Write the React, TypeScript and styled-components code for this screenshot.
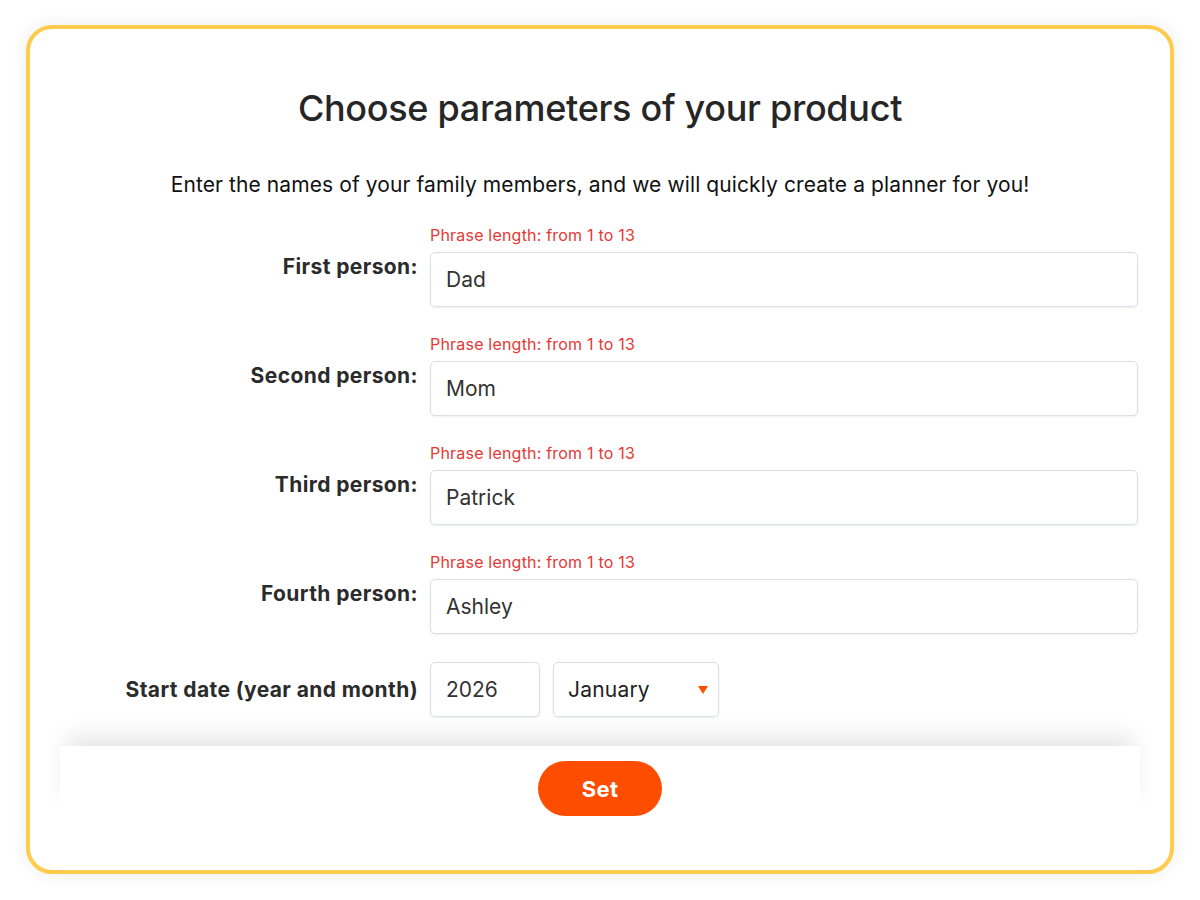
import React, { FC } from 'react'
import styled, { createGlobalStyle } from 'styled-components'

const GlobalStyle = createGlobalStyle`
  body {
    margin: 0;
    background: #ffffff;
    font-family: Inter, "Noto Sans", sans-serif;
    color: #222222;
  }
`

const Card = styled.div`
  box-sizing: border-box;
  width: 1148px;
  height: 849px;
  margin: 25px 26px;
  border: 4px solid #ffcb4c;
  border-radius: 26px;
  background: #ffffff;
  box-shadow: 0 0 18px rgba(0, 0, 0, 0.08);
  display: flex;
  flex-direction: column;
  align-items: center;
  padding-top: 57px;
  overflow: hidden;
`

const Title = styled.h1`
  margin: 0;
  font-size: 36px;
  line-height: 44px;
  font-weight: 500;
  color: #262626;
  letter-spacing: -0.3px;
`

const Subtitle = styled.p`
  margin: 43px 0 0;
  font-size: 21px;
  line-height: 24px;
  font-weight: 400;
  letter-spacing: 0.1px;
  color: #111111;
`

const Form = styled.div`
  box-sizing: border-box;
  margin-top: 29px;
  width: 1080px;
  padding-right: 2px;
  display: flex;
  flex-direction: column;
  gap: 28px;
`

const Row = styled.div`
  display: grid;
  grid-template-columns: 358px 1fr;
  column-gap: 12px;
  align-items: center;
`

const Label = styled.label`
  text-align: right;
  font-size: 21px;
  font-weight: 700;
  letter-spacing: 0.4px;
  color: #2b2b2b;
`

const Field = styled.div`
  display: flex;
  flex-direction: column;
  gap: 8px;
`

const Hint = styled.span`
  font-size: 16px;
  line-height: 18px;
  letter-spacing: 0.2px;
  color: #e53935;
`

const TextInput = styled.input<{ $width?: number }>`
  box-sizing: border-box;
  width: ${p => (p.$width ? `${p.$width}px` : '100%')};
  height: 55px;
  padding: 0 15px;
  border: 1px solid #dcdfe8;
  border-radius: 5px;
  box-shadow: 0 1px 2px rgba(30, 40, 80, 0.08);
  font-family: inherit;
  font-size: 21px;
  color: #333333;
  background: #ffffff;
  outline: none;
`

const DateGroup = styled.div`
  display: flex;
  gap: 13px;
`

const SelectBox = styled.div`
  box-sizing: border-box;
  width: 166px;
  height: 55px;
  padding: 0 14px;
  border: 1px solid #dcdfe8;
  border-radius: 5px;
  box-shadow: 0 1px 2px rgba(30, 40, 80, 0.08);
  display: flex;
  align-items: center;
  justify-content: space-between;
  font-size: 21px;
  letter-spacing: 0.2px;
  color: #222222;
`

const Caret = styled.span`
  width: 0;
  height: 0;
  border-left: 5px solid transparent;
  border-right: 5px solid transparent;
  border-top: 8px solid #ff4d00;
  margin-right: -4px;
`

const Footer = styled.div`
  margin-top: 29px;
  width: 1080px;
  background: #ffffff;
  box-shadow: 0 -16px 22px -6px rgba(0, 0, 0, 0.1);
  display: flex;
  justify-content: center;
  padding: 15px 0 4px;
`

const SetButton = styled.button`
  width: 124px;
  height: 55px;
  border: none;
  border-radius: 28px;
  background: #ff4d00;
  color: #ffffff;
  font-family: inherit;
  font-size: 22px;
  font-weight: 700;
  letter-spacing: 0.3px;
  cursor: pointer;
`

const people = [
  { label: 'First person:', value: 'Dad' },
  { label: 'Second person:', value: 'Mom' },
  { label: 'Third person:', value: 'Patrick' },
  { label: 'Fourth person:', value: 'Ashley' },
]

const App: FC = () => (
  <>
    <GlobalStyle />
    <Card>
      <Title>Choose parameters of your product</Title>
      <Subtitle>Enter the names of your family members, and we will quickly create a planner for you!</Subtitle>
      <Form>
        {people.map(p => (
          <Row key={p.label}>
            <Label>{p.label}</Label>
            <Field>
              <Hint>Phrase length: from 1 to 13</Hint>
              <TextInput defaultValue={p.value} />
            </Field>
          </Row>
        ))}
        <Row>
          <Label>Start date (year and month)</Label>
          <DateGroup>
            <TextInput $width={110} defaultValue="2026" />
            <SelectBox>
              January
              <Caret />
            </SelectBox>
          </DateGroup>
        </Row>
      </Form>
      <Footer>
        <SetButton>Set</SetButton>
      </Footer>
    </Card>
  </>
)

export default App
